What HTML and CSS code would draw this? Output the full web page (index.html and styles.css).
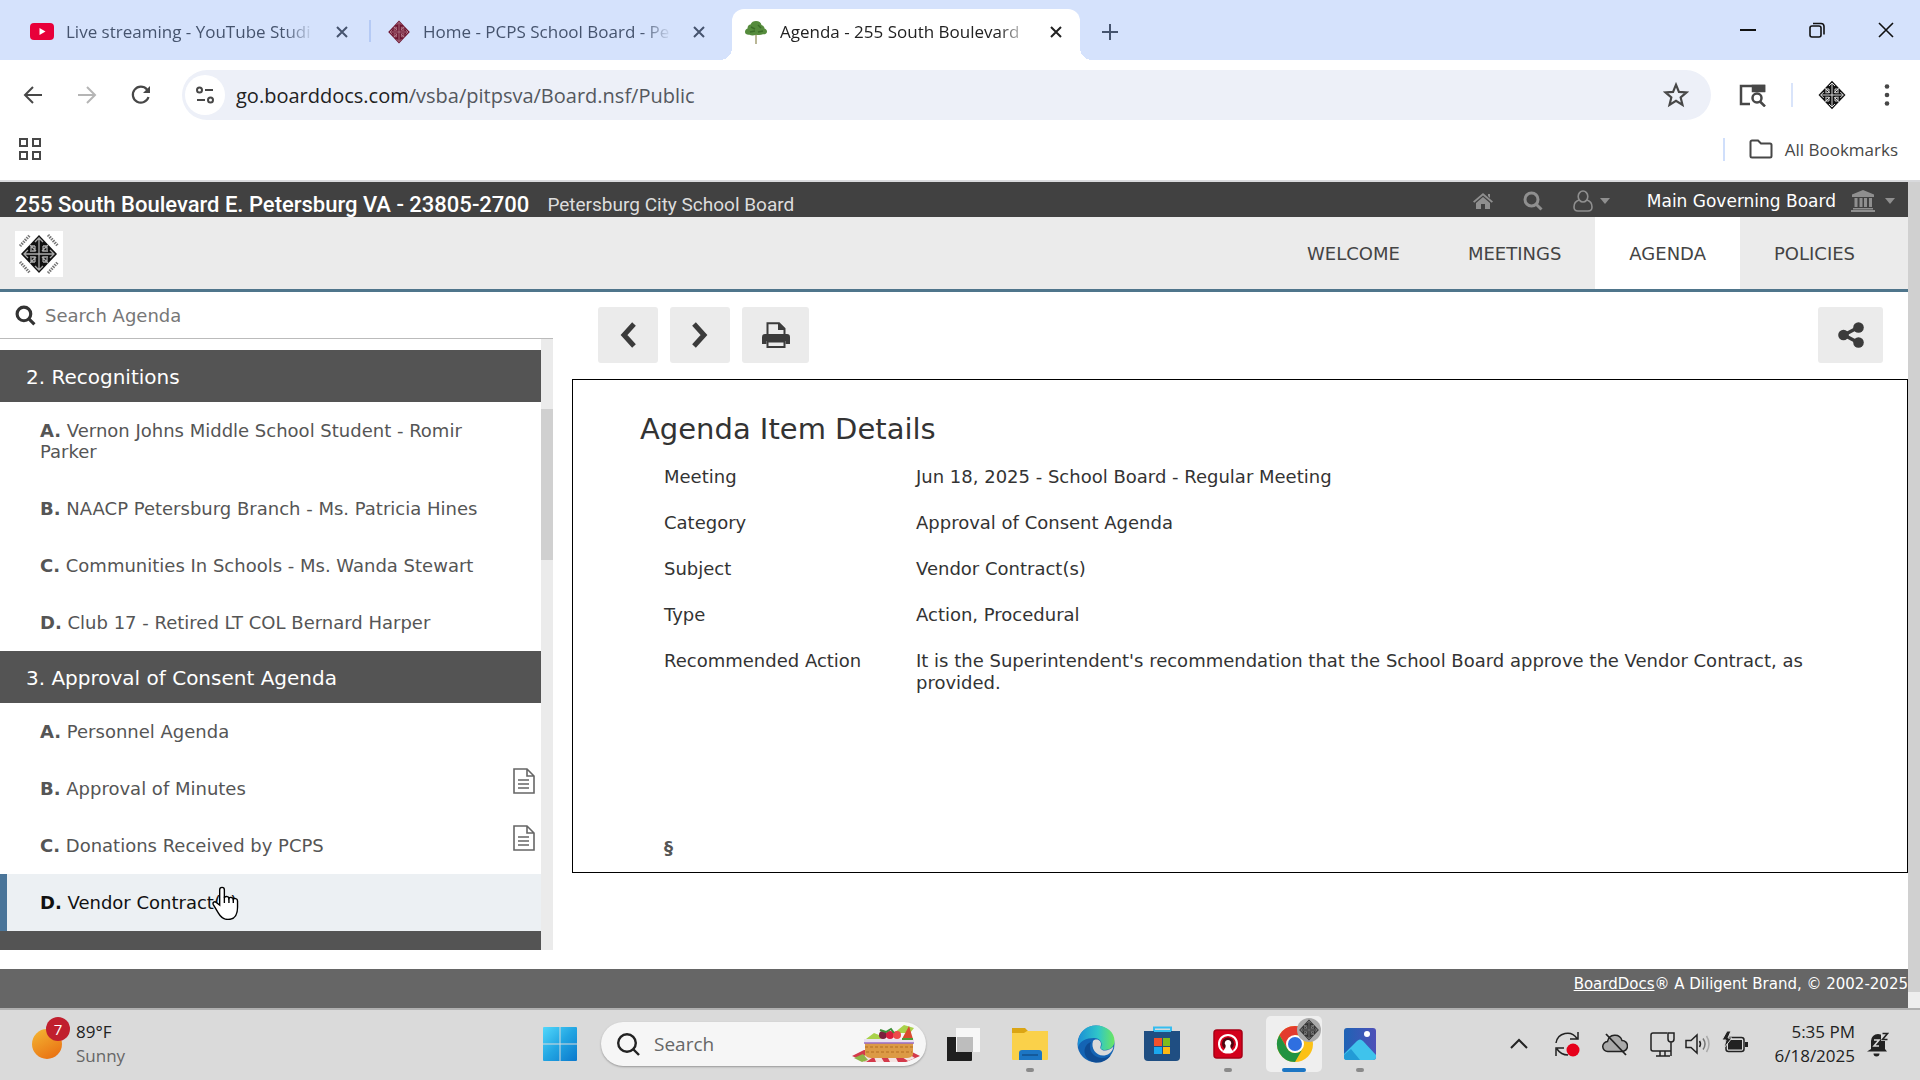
FILE: index.html
```html
<!DOCTYPE html>
<html lang="en">
<head>
<meta charset="utf-8">
<title>Agenda - 255 South Boulevard</title>
<link rel="stylesheet" href="styles.css">
</head>
<body>
<svg class="defs" aria-hidden="true">
  <symbol id="emblem" viewBox="0 0 40 40">
    <path d="M20 1 38 20 20 39 2 20z" fill="var(--emblem-fill, #111)"/>
    <g fill="none" stroke="var(--emblem-line, #ddd)" stroke-width="1.3">
      <path d="M20 4v32M5 20h30M16 8l4-4 4 4M16 32l4 4 4-4M9 16l-4 4 4 4M31 16l4 4-4 4"/>
      <path d="M17 17l-6-6M23 17l6-6M17 23l-6 6M23 23l6 6M12 16v-4h4M28 16v-4h-4M12 24v4h4M28 24v4h-4M16 12v5h-5M24 12v5h5M16 28v-5h-5M24 28v-5h5"/>
    </g>
  </symbol>
  <symbol id="close" viewBox="0 0 16 16"><path d="M3 3l10 10M13 3L3 13" fill="none" stroke="currentColor" stroke-width="2"/></symbol>
  <symbol id="magnify" viewBox="0 0 20 20"><path d="M8.500 2a6.500 6.500 0 1 0 0 13a6.500 6.500 0 0 0 0-13M13.200 13.200l5.300 5.300" fill="none" stroke="currentColor" stroke-width="3"/></symbol>
  <symbol id="document" viewBox="0 0 22 26"><path d="M1 1h13l7 7v17H1zM14 1v7h7M5 12h11M5 16h11M5 20h11" fill="none" stroke="currentColor" stroke-width="1.600"/></symbol>
  <symbol id="caret" viewBox="0 0 10 6"><path d="M0 0h10L5 6z" fill="currentColor"/></symbol>
</svg>

<header class="browser">
  <div class="tabstrip">
    <div class="tab">
      <svg class="favicon" viewBox="0 0 24 24"><rect y="3" width="24" height="17" rx="4" fill="#e8003a"/><path d="M9.500 8l6 3.500-6 3.500z" fill="#fff"/></svg>
      <span class="tab-title">Live streaming - YouTube Studi</span>
      <button class="tab-close" aria-label="Close tab"><svg viewBox="0 0 16 16"><use href="#close"/></svg></button>
    </div>
    <div class="tab tab-divided">
      <svg class="favicon favicon-red" viewBox="0 0 40 40"><use href="#emblem"/></svg>
      <span class="tab-title">Home - PCPS School Board - Pe</span>
      <button class="tab-close" aria-label="Close tab"><svg viewBox="0 0 16 16"><use href="#close"/></svg></button>
    </div>
    <div class="tab tab-active">
      <svg class="favicon" viewBox="0 0 24 24"><path d="M11.200 12h1.600v12h-1.600z" fill="#a9a57c"/><path d="M12 1c3 0 5 1.500 5.500 4 2 .5 3 2 3 3.500 1.500.5 2.500 1.500 2.500 3 0 2-1.500 3-4 2.800-2 .9-4.500 1-7 .4-2.500 1.100-5 .9-6.500 0C3 15 1 14 1 12s1-3 2.500-3.500C3.500 6 5 4.500 6.500 4.500 7.500 2 9.500 1 12 1z" fill="#558b3c"/><path d="M7 7l4 2M14 5l3 3M6 12l5-1M14 12l5-1" stroke="#3b6d28" stroke-width="1.500"/></svg>
      <span class="tab-title">Agenda - 255 South Boulevard</span>
      <button class="tab-close" aria-label="Close tab"><svg viewBox="0 0 16 16"><use href="#close"/></svg></button>
    </div>
    <button class="new-tab" aria-label="New tab"><svg viewBox="0 0 16 16"><path d="M8 0v16M0 8h16" stroke="currentColor" stroke-width="2"/></svg></button>
    <div class="window-controls">
      <button aria-label="Minimize"><svg viewBox="0 0 16 16"><path d="M0 8h16" stroke="currentColor" stroke-width="2"/></svg></button>
      <button aria-label="Restore"><svg viewBox="0 0 16 16" fill="none" stroke="currentColor" stroke-width="1.600"><rect x="1" y="4" width="11" height="11" rx="2"/><path d="M4 1.500h8a3 3 0 0 1 3 3v8"/></svg></button>
      <button aria-label="Close"><svg viewBox="0 0 16 16"><path d="M1 1l14 14M15 1L1 15" stroke="currentColor" stroke-width="1.600"/></svg></button>
    </div>
  </div>

  <div class="toolbar">
    <button class="nav-button" aria-label="Back"><svg viewBox="0 0 20 20"><path d="M19 10H2M10 2l-8 8 8 8" fill="none" stroke="currentColor" stroke-width="2"/></svg></button>
    <button class="nav-button nav-disabled" aria-label="Forward" disabled><svg viewBox="0 0 20 20"><path d="M1 10h17M10 2l8 8-8 8" fill="none" stroke="currentColor" stroke-width="2"/></svg></button>
    <button class="nav-button" aria-label="Reload"><svg viewBox="0 0 20 20"><path d="M17.500 12A8 8 0 1 1 16 4.500l2 2" fill="none" stroke="currentColor" stroke-width="2.200"/><path d="M19 1v7h-7z" fill="currentColor"/></svg></button>
    <div class="omnibox">
      <button class="site-info" aria-label="View site information"><svg viewBox="0 0 20 20" fill="none" stroke="currentColor" stroke-width="2"><circle cx="4.500" cy="5" r="2.500"/><path d="M10 5h8M2 15h8"/><circle cx="15.500" cy="15" r="2.500"/></svg></button>
      <div class="url" role="textbox" aria-label="Address"><span class="url-host">go.boarddocs.com</span>/vsba/pitpsva/Board.nsf/Public</div>
      <button class="star" aria-label="Bookmark this tab"><svg viewBox="0 0 24 24"><path d="M12 2.500l2.700 6.600 7 .5-5.400 4.600 1.700 7-6-3.800-6 3.800 1.700-7L2.300 9.600l7-.5z" fill="none" stroke="currentColor" stroke-width="2"/></svg></button>
    </div>
    <button class="tool-button" aria-label="Search in side panel"><svg viewBox="0 0 28 24" fill="none" stroke="currentColor" stroke-width="2.500"><path d="M26 9V3H3v18h9"/><path d="M15 3h11v5H15z" fill="currentColor"/><circle cx="19" cy="15" r="4.500"/><path d="M22 18.500l5 5"/></svg></button>
    <span class="toolbar-rule"></span>
    <button class="profile" aria-label="Profile"><svg viewBox="0 0 40 40"><use href="#emblem"/></svg></button>
    <button class="menu-button" aria-label="Menu"><svg viewBox="0 0 6 24" fill="currentColor"><circle cx="3" cy="3.500" r="2.300"/><circle cx="3" cy="12" r="2.300"/><circle cx="3" cy="20.500" r="2.300"/></svg></button>
  </div>

  <div class="bookmarks">
    <button class="apps" aria-label="Apps"><svg viewBox="0 0 22 22" fill="none" stroke="currentColor" stroke-width="2"><path d="M1 1h7v7H1zM14 1h7v7h-7zM1 14h7v7H1zM14 14h7v7h-7z"/></svg></button>
    <button class="all-bookmarks"><svg viewBox="0 0 24 20"><path d="M1.500 3A1.500 1.500 0 0 1 3 1.500h6l3 3h9A1.500 1.500 0 0 1 22.500 6v11a1.500 1.500 0 0 1-1.500 1.500H3A1.500 1.500 0 0 1 1.500 17z" fill="none" stroke="currentColor" stroke-width="2"/></svg>All Bookmarks</button>
  </div>
</header>

<div class="viewport">
  <div class="site">
    <div class="site-bar">
      <h1 class="site-title">255 South Boulevard E. Petersburg VA - 23805-2700</h1>
      <span class="site-subtitle">Petersburg City School Board</span>
      <div class="site-tools">
        <a href="#home" aria-label="Home"><svg class="i-home" viewBox="0 0 20 16" fill="currentColor"><path d="M10 0l10 8.500-1.300 1.300L10 2.500 1.300 9.800 0 8.500z"/><path d="M10 4l7 6v6h-5v-5H8v5H3v-6zM15 1h2v4l-2-2z"/></svg></a>
        <a href="#search" aria-label="Search"><svg class="i-search" viewBox="0 0 20 20"><use href="#magnify"/></svg></a>
        <a class="with-caret" href="#account" aria-label="Account"><svg class="i-user" viewBox="0 0 20 22" fill="none" stroke="currentColor" stroke-width="1.600"><ellipse cx="10" cy="6.500" rx="4.800" ry="5.500"/><path d="M6 10C3 11 1 13 1 17c0 3 1.500 4 4 4h10c2.500 0 4-1 4-4 0-4-2-6-5-7"/></svg><svg class="i-caret" viewBox="0 0 10 6"><use href="#caret"/></svg></a>
        <a class="board-menu with-caret" href="#boards">Main Governing Board<svg class="i-bank" viewBox="0 0 24 22" fill="currentColor"><path d="M12 0l11 4.500V7H1V4.500zM3.500 8h3v9h-3zM8.500 8h3v9h-3zM13 8h3v9h-3zM18 8h3v9h-3zM2 18h20v1.500H2zM0 20h24v2H0z"/></svg><svg class="i-caret" viewBox="0 0 10 6"><use href="#caret"/></svg></a>
      </div>
    </div>

    <div class="site-nav">
      <a class="logo" href="#home" aria-label="Petersburg City Public Schools"><svg viewBox="0 0 48 46"><use class="bold-emblem" href="#emblem" x="3" y="3" width="42" height="40"/><path d="M5 15L15 4M33 4l10 11M5 31l10 11M33 42l10-11" stroke="#777" stroke-width="3" stroke-dasharray="1.500 1"/></svg></a>
      <nav class="main-menu">
        <a href="#welcome">WELCOME</a>
        <a href="#meetings">MEETINGS</a>
        <a class="current" href="#agenda">AGENDA</a>
        <a href="#policies">POLICIES</a>
      </nav>
    </div>

    <main class="columns">
      <aside class="sidebar">
        <div class="agenda-search">
          <label for="q" aria-label="Search Agenda"><svg viewBox="0 0 20 20"><use href="#magnify"/></svg></label>
          <input id="q" type="text" placeholder="Search Agenda">
        </div>
        <div class="agenda-scroll">
          <div class="agenda">
            <h2 class="section">2. Recognitions</h2>
            <a class="item" href="#2a"><span><b>A.</b> Vernon Johns Middle School Student - Romir Parker</span></a>
            <a class="item" href="#2b"><span><b>B.</b> NAACP Petersburg Branch - Ms. Patricia Hines</span></a>
            <a class="item" href="#2c"><span><b>C.</b> Communities In Schools - Ms. Wanda Stewart</span></a>
            <a class="item" href="#2d"><span><b>D.</b> Club 17 - Retired LT COL Bernard Harper</span></a>
            <h2 class="section">3. Approval of Consent Agenda</h2>
            <a class="item" href="#3a"><span><b>A.</b> Personnel Agenda</span></a>
            <a class="item" href="#3b"><span><b>B.</b> Approval of Minutes</span><svg class="i-doc" viewBox="0 0 22 26"><use href="#document"/></svg></a>
            <a class="item" href="#3c"><span><b>C.</b> Donations Received by PCPS</span><svg class="i-doc" viewBox="0 0 22 26"><use href="#document"/></svg></a>
            <a class="item selected" href="#3d"><span><b>D.</b> Vendor Contract(s)</span>
              <svg class="pointer" viewBox="0 0 28 32"><path d="M9 18V3.500a2.200 2.200 0 0 1 4.400 0V11c.5-1.500 4-1.500 4.300.5.600-1.200 3.800-1 4.100.8.800-1 4-.6 4 1.700v6c0 7-3 11.500-9 11.500-5 0-7-2.500-9-6L3 17.500c-1-2 1.200-3.600 2.800-2z" fill="#fff" stroke="#000" stroke-width="1.300"/><path d="M13.400 10v6M17.700 11v5M21.800 12v4" stroke="#000" stroke-width="1.300"/></svg>
            </a>
            <div class="section section-next"></div>
          </div>
          <div class="list-track"><div class="list-thumb"></div></div>
        </div>
      </aside>

      <section class="content">
        <div class="actions">
          <button aria-label="Previous"><svg class="i-chevron" viewBox="0 0 18 26"><path d="M15 2L5 13l10 11" fill="none" stroke="currentColor" stroke-width="5"/></svg></button>
          <button aria-label="Next"><svg class="i-chevron" viewBox="0 0 18 26"><path d="M3 2l10 11L3 24" fill="none" stroke="currentColor" stroke-width="5"/></svg></button>
          <button class="print" aria-label="Print"><svg viewBox="0 0 28 26"><path d="M5.500 13V1.200H17l5.500 5.500V13" fill="none" stroke="currentColor" stroke-width="2"/><path d="M16 1v7h7z" fill="currentColor"/><path d="M3 12h22a3 3 0 0 1 3 3v7h-4.500v-3h-19v3H0v-7a3 3 0 0 1 3-3z" fill="currentColor"/><path d="M5.500 19.500h17V25h-17z" fill="#ebebeb" stroke="currentColor" stroke-width="2"/></svg></button>
          <button class="share" aria-label="Share"><svg viewBox="0 0 26 26"><path d="M20 5.500L6 13l14 7.500" fill="none" stroke="currentColor" stroke-width="3.500"/><g fill="currentColor"><circle cx="20.500" cy="5.500" r="5.300"/><circle cx="5.500" cy="13" r="5.300"/><circle cx="20.500" cy="20.500" r="5.300"/></g></svg></button>
        </div>
        <article class="details">
          <h2>Agenda Item Details</h2>
          <table>
            <tbody>
              <tr><th scope="row">Meeting</th><td>Jun 18, 2025 - School Board - Regular Meeting</td></tr>
              <tr><th scope="row">Category</th><td>Approval of Consent Agenda</td></tr>
              <tr><th scope="row">Subject</th><td>Vendor Contract(s)</td></tr>
              <tr><th scope="row">Type</th><td>Action, Procedural</td></tr>
              <tr><th scope="row">Recommended Action</th><td>It is the Superintendent's recommendation that the School Board approve the Vendor Contract, as provided.</td></tr>
            </tbody>
          </table>
          <p class="mark">§</p>
        </article>
      </section>
    </main>

    <footer class="site-footer"><a href="#boarddocs">BoardDocs</a>® A Diligent Brand, © 2002-2025</footer>
  </div>
  <div class="page-track"><div class="page-thumb"></div></div>
</div>

<div class="taskbar">
  <div class="weather">
    <div class="sun"><span class="alerts">7</span></div>
    <div class="forecast"><span>89°F</span><span class="muted">Sunny</span></div>
  </div>
  <div class="dock">
    <button class="app" aria-label="Start"><svg class="i-36" viewBox="0 0 36 36"><defs><linearGradient id="win" x1="0" y1="0" x2="1" y2="1"><stop offset="0" stop-color="#52d8fb"/><stop offset=".5" stop-color="#22a5e2"/><stop offset="1" stop-color="#0b78cc"/></linearGradient></defs><path fill="url(#win)" d="M2 1h15.500v16.500H1V2a1 1 0 0 1 1-1zM18.500 1H34a1 1 0 0 1 1 1v15.500H18.500zM1 18.500h16.500V35H2a1 1 0 0 1-1-1zM18.500 18.500H35V34a1 1 0 0 1-1 1H18.500z"/></svg></button>
    <div class="task-search">
      <label for="task-q" aria-label="Search"><svg viewBox="0 0 24 24" fill="none" stroke="currentColor" stroke-width="2.400"><circle cx="11" cy="11" r="8.800"/><path d="M17 17l6 6"/></svg></label>
      <input id="task-q" type="text" placeholder="Search">
      <svg class="picnic" viewBox="0 0 68 38"><path d="M0 31l12-6h44l12 6-14 6H14z" fill="#d43a4b"/><path d="M6 33l8-3 6 3-6 4zM22 32h7l3 5h-8zM36 33h8l2 4h-8zM50 32l8-2 5 3-7 3z" fill="#f3e4e2"/><path d="M2 33l9-4 5 6-6 2z" fill="#8fb548"/><path d="M13 17h48v13q-2 3-6 3H19q-4 0-6-3z" fill="#dc9a45"/><path d="M13 22h48M14 27h46" stroke="#c07c2e" stroke-width="1.300" stroke-dasharray="3 2"/><path d="M12 14h50v4H12z" fill="#e9e2f0"/><path d="M12 18h50" stroke="#9a6dc4" stroke-width="1.500"/><path d="M14 14l8-6 10 4-4 2zM42 8l10-8 10 3-4 5z" fill="#a9d24a"/><path d="M50 14l7-13 4 13z" fill="#d94a2f"/><path d="M50 14h11" stroke="#4f9b35" stroke-width="2"/><circle cx="31" cy="10" r="4" fill="#7b1f3d"/><circle cx="38" cy="10" r="4" fill="#d91d3d"/><circle cx="45" cy="10" r="4" fill="#ef4a4a"/><path d="M28 5l6 2 5-3 3 4" stroke="#3f8f3a" stroke-width="2" fill="none"/></svg>
    </div>
    <button class="app" aria-label="Task view"><svg class="i-36" viewBox="0 0 36 36"><path d="M1 11h10v14h15v9a1 1 0 0 1-1 1H1z" fill="#1f1f1f"/><path d="M10 2h24v24H10z" fill="#f7f7f7"/><path d="M11 11h16v15H11z" fill="#bdbdbd"/></svg></button>
    <button class="app running" aria-label="File Explorer"><svg class="i-36" viewBox="0 0 36 36"><path d="M0 2h13l3 3h20v8H0z" fill="#dba514"/><path d="M0 7h12l3-2h21v28a1 1 0 0 1-1 1H1a1 1 0 0 1-1-1z" fill="#fad14a"/><path d="M7 34V27q0-3 3-3h17q3 0 3 3v7z" fill="#1c76c4"/><path d="M10 29h16" stroke="#145a9b" stroke-width="2"/></svg></button>
    <button class="app" aria-label="Edge"><svg class="i-38" viewBox="0 0 38 38"><defs><linearGradient id="e1" x1="0" y1="0" x2="1" y2="0"><stop offset="0" stop-color="#1c8fd6"/><stop offset=".55" stop-color="#2fc6c9"/><stop offset="1" stop-color="#6be660"/></linearGradient></defs><circle cx="19" cy="19" r="18.500" fill="#1464b4"/><path d="M1 17C2 6 10 .5 19 .5c11 0 18.500 7 18.500 15.500 0 6-5 9-9.500 9-3 0-5-1-4-3 2-4-1-9-7-9C9 13 3 16 1 22z" fill="url(#e1)"/><path d="M14 17c-3 7 1 15 10 16 4 .4 7-1 10-3-4 6-10 8-15 7.500C10 37 6 29 8 23c1-3 3-5 6-6z" fill="#0e4c94"/><path d="M16 16c3-3 8-1 8 3 0 2-1 3-.5 4.500 1.500 3 8.500 3 13-2-1 5-4 8-9 9-8 1-14-7-11.500-14.500z" fill="#dadada"/></svg></button>
    <button class="app" aria-label="Microsoft Store"><svg class="i-36" viewBox="0 0 36 36"><path d="M10 8V1.500h17V8" fill="none" stroke="#35bdf0" stroke-width="2"/><path d="M0 5h36v26q0 4-4 4H4q-4 0-4-4z" fill="#1f4e82"/><path d="M10 5h17" stroke="#35bdf0" stroke-width="2"/><path d="M10 12h8v8h-8z" fill="#f2512b"/><path d="M19 12h7v8h-7z" fill="#7fbb1c"/><path d="M10 21h8v7h-8z" fill="#1ba8ee"/><path d="M19 21h7v7h-7z" fill="#fdb913"/></svg></button>
    <button class="app running" aria-label="OpenVPN"><svg class="i-30" viewBox="0 0 30 30"><rect x="1" y="1" width="28" height="28" rx="3" fill="#d3001b" stroke="#a80016" stroke-width="1.500"/><path d="M9.500 22a9 9 0 1 1 11 0" fill="none" stroke="#fff" stroke-width="2"/><circle cx="15" cy="14.500" r="6" fill="#4d0610"/><path d="M15 11a3 3 0 0 1 2.500 5c-.5 1 0 4.500 3.500 6.500q-1 2-6 2t-6-2c3.500-2 4-5.500 3.500-6.500A3 3 0 0 1 15 11z" fill="#fff"/></svg></button>
    <button class="app running active" aria-label="Chrome"><svg class="i-chrome" viewBox="0 0 46 46"><g transform="translate(20 26)"><circle r="18" fill="#fbc116"/><path d="M-15.600-9A18 18 0 0 1 15.600-9H0L-7.800 4.500z" fill="#e33b2e"/><path d="M-15.600-9L-7.800 4.500A9 9 0 0 0 7.800 4.500L0 18A18 18 0 0 1-15.600-9z" fill="#229342"/><circle r="9" fill="#fff"/><circle r="7" fill="#2f6fe0"/></g><circle cx="34" cy="12" r="12" fill="#aaa"/><use class="dim-emblem" href="#emblem" x="23" y="1" width="22" height="22"/></svg></button>
    <button class="app running" aria-label="Photos"><svg class="i-32" viewBox="0 0 32 32"><defs><linearGradient id="ph" x1="0" y1="0" x2="1" y2="0"><stop offset="0" stop-color="#1e63b5"/><stop offset="1" stop-color="#4e50b8"/></linearGradient></defs><rect width="32" height="32" rx="3" fill="url(#ph)"/><path d="M13 13q3-3 6 0l13 14v2q0 3-3 3H3q-3 0-3-3v-3z" fill="#3fc3ec"/><path d="M0 27l7-6 9 11H3q-3 0-3-3z" fill="#239bd6"/><circle cx="23" cy="6" r="3" fill="#fff"/></svg></button>
  </div>
  <div class="tray">
    <svg class="t-chevron" viewBox="0 0 18 12"><path d="M1 10l8-8 8 8" fill="none" stroke="#222" stroke-width="2"/></svg>
    <svg class="t-icon" viewBox="0 0 26 26"><path d="M2 12A11.500 11.500 0 0 1 23 7.500M24 1v7h-8M10 17H2v8M3 18q4 6 11 6" fill="none" stroke="#222" stroke-width="1.500"/><circle cx="19" cy="19" r="6.500" fill="#e6001a"/></svg>
    <svg class="t-icon" viewBox="0 0 26 26"><path d="M6 20.500a5 5 0 0 1-.5-10A7.500 7.500 0 0 1 20 9.500a5.500 5.500 0 0 1 0 11z" fill="#aaa" stroke="#222" stroke-width="1.500"/><path d="M4 3l20 21" stroke="#222" stroke-width="1.800"/></svg>
    <svg class="t-icon" viewBox="0 0 26 26" fill="none" stroke="#222" stroke-width="1.500"><path d="M17 2H3a2 2 0 0 0-2 2v14a2 2 0 0 0 2 2h18v-9M6 25h14M10 20v5M15 20v5M18 2h6v6a3 3 0 0 1-6 0zM21 11v14"/></svg>
    <div class="t-status">
    <svg class="t-icon" viewBox="0 0 26 26" fill="none" stroke="#222" stroke-width="1.500"><path d="M1 9.500h5L12 4v18l-6-5.500H1zM14.500 10q2 3 0 6"/><path d="M18 7.500q4 5.500 0 11" stroke="#777"/><path d="M21.500 5q5 8 0 16" stroke="#aaa"/></svg>
    <svg class="t-icon" viewBox="0 0 26 26"><rect x="4" y="6.500" width="18" height="14" rx="2.500" fill="none" stroke="#222" stroke-width="1.500"/><path d="M6 9h14v9.500H6zM23 11h3v5h-3z" fill="#222"/><path d="M5 0L0 9h4l-2 8 8-10H6l3-7z" fill="#222" stroke="#dadada"/></svg>
    </div>
    <div class="clock"><span>5:35 PM</span><span>6/18/2025</span></div>
    <svg class="t-bell" viewBox="0 0 22 26"><path d="M4 18V10a7 7 0 0 1 14 0v8l2 2.500H0z" fill="#222"/><path d="M6.500 22.500h6a3 3 0 0 1-6 0z" fill="#222"/><path d="M7 9h5l-5 6h5" fill="none" stroke="#dadada" stroke-width="1.600"/><path d="M14 1h8v9h-8z" fill="#dadada"/><path d="M15.500 2.500h5l-5 6h5" fill="none" stroke="#222" stroke-width="1.600"/></svg>
  </div>
</div>
</body>
</html>
```
FILE: styles.css
```css
:root {
  --ui: "Open Sans", "Noto Sans", sans-serif;
  --page: "DejaVu Sans", sans-serif;
  --head: Roboto, "Liberation Sans", sans-serif;
}

* { box-sizing: border-box; }

body {
  margin: 0;
  min-height: 100vh;
  display: flex;
  flex-direction: column;
  background: #fff;
  color: #333;
  font-family: var(--page);
  font-size: 18px;
}

button {
  padding: 0;
  border: 0;
  background: none;
  color: inherit;
  font: inherit;
  display: flex;
  align-items: center;
  justify-content: center;
}

input {
  min-width: 0;
  flex: 1;
  padding: 0;
  border: 0;
  outline: 0;
  background: none;
  font: inherit;
}

a { color: inherit; text-decoration: none; }
svg { display: block; flex: none; }
.defs { width: 0; height: 0; position: absolute; }

/* Browser chrome */
.browser { font-family: var(--ui); color: #474747; }

.tabstrip {
  height: 60px;
  display: flex;
  align-items: flex-end;
  gap: 9px;
  padding-left: 18px;
  background: #d5e2fc;
  color: #46546e;
}

.tab {
  position: relative;
  width: 348px;
  height: 51px;
  display: flex;
  align-items: center;
  gap: 12px;
  padding: 0 14px 6px 12px;
}

.tab-divided::before {
  content: "";
  position: absolute;
  left: -6px;
  top: 11px;
  width: 2px;
  height: 22px;
  background: #b5caf5;
}

.tab-active {
  background: #fff;
  border-radius: 12px 12px 0 0;
  color: #222;
}

.tab-active::before,
.tab-active::after {
  content: "";
  position: absolute;
  bottom: 0;
  width: 12px;
  height: 12px;
  background: radial-gradient(circle at 0 0, transparent 12px, #fff 12px);
}
.tab-active::before { left: -12px; }
.tab-active::after { right: -12px; transform: scaleX(-1); }

.favicon { width: 24px; height: 24px; }
.favicon-red { --emblem-fill: #6d1531; --emblem-line: #b98391; }

.tab-title {
  flex: 1;
  overflow: hidden;
  white-space: nowrap;
  font-size: 17px;
  line-height: 24px;
  -webkit-mask-image: linear-gradient(to right, #000 86%, transparent 98%);
  mask-image: linear-gradient(to right, #000 86%, transparent 98%);
}

.tab-close { width: 20px; height: 20px; }
.tab-close svg { width: 16px; height: 16px; }

.new-tab { width: 42px; height: 51px; padding-bottom: 6px; }
.new-tab svg { width: 16px; height: 16px; }

.window-controls { margin-left: auto; height: 60px; display: flex; color: #111; }
.window-controls button { width: 69px; }
.window-controls svg { width: 16px; height: 16px; }

.toolbar {
  height: 70px;
  display: flex;
  align-items: center;
  padding: 0 30px 0 6px;
}

.nav-button { width: 54px; height: 40px; }
.nav-button svg { width: 20px; height: 20px; }
.nav-disabled { color: #b5b5b5; }

.omnibox {
  flex: 1;
  height: 50px;
  display: flex;
  align-items: center;
  margin-left: 14px;
  padding: 0 22px 0 3px;
  border-radius: 25px;
  background: #edf0f8;
}

.site-info {
  width: 40px;
  height: 40px;
  margin-right: 11px;
  border-radius: 50%;
  background: #fff;
}
.site-info svg { width: 20px; height: 20px; }

.url { flex: 1; font-size: 20px; color: #54585e; }
.url-host { color: #222; }
.star svg { width: 26px; height: 26px; }

.tool-button { margin-left: 27px; }
.tool-button svg { width: 28px; height: 24px; }
.toolbar-rule { width: 2px; height: 24px; margin: 0 24px 0 25px; background: #d9e4fa; }
.profile { margin-right: 37px; }
.profile svg { width: 30px; height: 30px; }
.menu-button svg { width: 6px; height: 24px; }

.bookmarks {
  height: 52px;
  display: flex;
  align-items: center;
  justify-content: space-between;
  padding: 0 22px 12px 19px;
  border-bottom: 2px solid #d9dadd;
  font-size: 17px;
}
.apps svg { width: 22px; height: 22px; }
.all-bookmarks { gap: 12px; padding-left: 24px; border-left: 2px solid #d0dffb; }
.all-bookmarks svg { width: 24px; height: 20px; }

/* Page viewport */
.viewport { flex: 1; display: flex; }
.site { flex: 1; min-width: 0; display: flex; flex-direction: column; }

.page-track { width: 12px; padding-bottom: 16px; background: #eee; display: flex; }
.page-thumb { flex: 1; background: #d0d0d0; }

.site-bar {
  height: 35px;
  display: flex;
  align-items: center;
  padding: 2px 13px 0 15px;
  background: #414141;
  color: #fff;
}

.site-title,
.site-subtitle { padding-top: 8px; line-height: 27px; font-family: var(--head); }
.site-title { margin: 0 18px 0 0; font-size: 22px; font-weight: 500; }
.site-subtitle { font-size: 19px; color: #ddd; }

.site-tools { margin-left: auto; display: flex; align-items: center; color: #8f8f8f; font-size: 16px; }
.with-caret { display: flex; align-items: center; }
.board-menu { margin-left: 37px; }
.i-home { width: 20px; height: 18px; margin-right: 30px; }
.i-search { width: 20px; height: 20px; margin-right: 30px; }
.i-user { width: 20px; height: 22px; margin-right: 7px; }
.i-bank { width: 24px; height: 22px; margin: 0 10px 0 15px; }
.i-caret { width: 10px; height: 6px; }
.board-menu { color: #fff; font-size: 17px; }
.board-menu svg { color: #8f8f8f; }

.site-nav {
  height: 75px;
  display: flex;
  align-items: stretch;
  justify-content: space-between;
  padding: 0 19px 0 15px;
  background: #ebebeb;
  border-bottom: 3px solid #4f758b;
}
.logo { align-self: center; padding: 1px 0 0; }
.logo svg { width: 48px; height: 46px; background: #fff; }
.bold-emblem { --emblem-line: #aaa; }
.main-menu { display: flex; }
.main-menu a { display: flex; align-items: center; padding: 0 34px; color: #444; }
.main-menu .current { background: #fff; }

.columns { flex: 1; display: flex; align-items: flex-start; gap: 19px; padding-bottom: 19px; }

/* Agenda sidebar */
.sidebar { width: 553px; }

.agenda-search {
  height: 47px;
  display: flex;
  align-items: center;
  gap: 9px;
  padding: 0 15px;
  border-bottom: 1px solid #bbb;
}
.agenda-search label { color: #333; }
.agenda-search svg { width: 21px; height: 21px; }
.agenda-search input::placeholder { color: #777; }

.agenda-scroll { display: flex; }
.agenda { flex: 1; min-width: 0; padding-top: 11px; }

.section {
  margin: 0;
  padding: 2px 26px 0;
  background: #545454;
  color: #fff;
  font-size: 20px;
  font-weight: 400;
  line-height: 50px;
}
.section-next { height: 19px; }

.item {
  position: relative;
  display: flex;
  justify-content: space-between;
  padding: 18px 6px 18px 40px;
  color: #555;
  line-height: 21px;
}
.item span { max-width: 460px; }
.i-doc { width: 22px; height: 26px; margin: -10px 0 -4px; color: #666; }

.selected {
  padding-left: 33px;
  border-left: 7px solid #4a7599;
  background: #ecf0f3;
  color: #111;
}

.pointer { position: absolute; left: 203px; top: 12px; width: 30px; height: 34px; }

.list-track { width: 12px; padding-top: 70px; background: #ebebeb; }
.list-thumb { height: 151px; background: #d0d0d0; }

/* Item details */
.content { flex: 1; min-width: 0; }

.actions { display: flex; gap: 12px; padding: 15px 25px 16px 26px; }
.actions button {
  width: 60px;
  height: 56px;
  border-radius: 3px;
  background: #ebebeb;
  color: #3b3b3b;
}
.actions .print { width: 67px; }
.actions .share { width: 65px; margin-left: auto; }
.i-chevron { width: 18px; height: 26px; }
.print svg { width: 28px; height: 26px; }
.share svg { width: 26px; height: 26px; }

.details {
  padding: 31px 72px 12px 67px;
  border: 1px solid #000;
  color: #333;
}
.details h2 { margin: 0; font-size: 29px; font-weight: 400; line-height: 36px; }
.details table { width: 100%; margin-top: 7px; border-collapse: collapse; }
.details th {
  width: 276px;
  padding: 12px 0 12px 24px;
  text-align: left;
  vertical-align: top;
  font-weight: 400;
  line-height: 22px;
}
.details td { padding: 12px 0; line-height: 22px; }
.mark { margin: 130px 0 0 24px; line-height: 24px; font-weight: 700; color: #555; }

.site-footer {
  height: 39px;
  padding-top: 4px;
  background: #666;
  color: #fff;
  text-align: right;
  font-size: 15px;
  line-height: 22px;
}
.site-footer a { text-decoration: underline; }

/* Windows taskbar */
.taskbar {
  height: 72px;
  display: grid;
  grid-template-columns: 1fr auto 1fr;
  align-items: center;
  padding-bottom: 2px;
  border-top: 2px solid #b0b0b0;
  background: #dadada;
  color: #222;
  font-family: var(--ui);
  font-size: 17px;
}

.weather { display: flex; align-items: center; gap: 14px; padding-left: 32px; }
.sun {
  position: relative;
  width: 30px;
  height: 30px;
  border-radius: 50%;
  background: linear-gradient(150deg, #f4b834, #e8690f);
}
.alerts {
  position: absolute;
  left: 14px;
  top: -12px;
  width: 24px;
  height: 24px;
  border-radius: 50%;
  background: #c01f2e;
  color: #fff;
  text-align: center;
  font-size: 15px;
  line-height: 24px;
}
.forecast, .clock { display: flex; flex-direction: column; line-height: 24px; }
.muted { color: #666; }

.dock { display: flex; align-items: center; }
.app { position: relative; width: 66px; height: 56px; }
.running::after {
  content: "";
  position: absolute;
  bottom: 0;
  left: 29px;
  width: 8px;
  height: 4px;
  border-radius: 2px;
  background: #8a8a8a;
}
.active { width: 56px; margin: 0 5px; border-radius: 5px; background: #efefef; }
.active::after { left: 16px; width: 24px; background: #1c76c4; }
.dim-emblem { --emblem-fill: #333; --emblem-line: #888; }
.i-30 { width: 30px; height: 30px; }
.i-32 { width: 32px; height: 32px; }
.i-36 { width: 36px; height: 36px; }
.i-38 { width: 38px; height: 38px; }
.i-chrome { width: 46px; height: 46px; margin: 0 0 6px 8px; }

.task-search {
  width: 325px;
  height: 44px;
  display: flex;
  align-items: center;
  gap: 14px;
  margin: 0 5px 0 8px;
  padding: 0 6px 0 15px;
  border-radius: 22px;
  background: #f6f6f6;
  box-shadow: 0 1px 2px #999;
  font-size: 19px;
}
.task-search label svg { width: 24px; height: 24px; }
.task-search input::placeholder { color: #666; }
.picnic { width: 68px; height: 38px; }

.tray { justify-self: end; display: flex; align-items: center; gap: 22px; padding-right: 31px; }
.t-chevron { width: 18px; height: 12px; margin-right: 4px; }
.t-icon { width: 26px; height: 26px; }
.t-status { display: flex; gap: 11px; margin-left: -13px; }
.clock { align-items: flex-end; margin-left: 4px; }
.t-bell { width: 22px; height: 26px; margin-left: -10px; }
```
